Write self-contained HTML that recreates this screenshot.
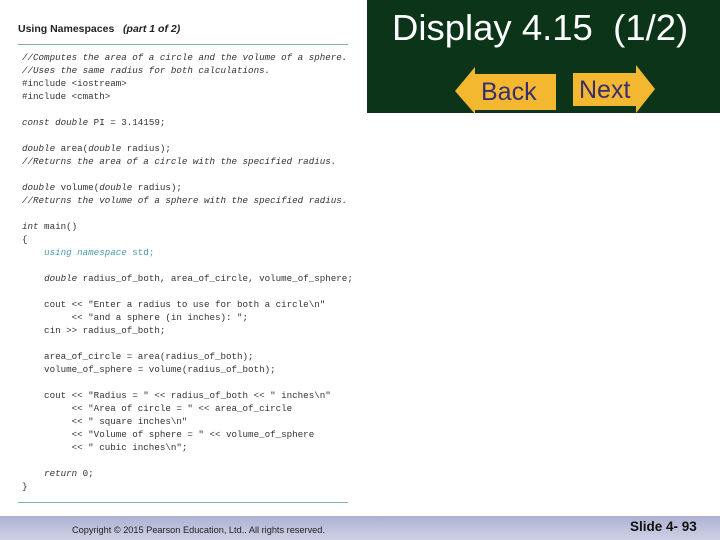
<!DOCTYPE html>
<html><head><meta charset="utf-8"><style>
body{margin:0;width:720px;height:540px;position:relative;background:#fff;overflow:hidden;font-family:"Liberation Sans",sans-serif}
.t{position:absolute;left:18px;top:23px;font-size:10.5px;font-weight:bold;color:#222}
.hr{position:absolute;left:18px;width:330px;height:1px;background:#7fb3b8}
pre{position:absolute;left:22px;top:51px;margin:0;font-family:"Liberation Mono",monospace;font-size:9.2px;line-height:13px;color:#333}
i{font-style:italic}
.c{color:#4a9ab0}
.g{position:absolute;left:367px;top:0;width:353px;height:113px;background:#0b3419}
.d{position:absolute;left:392px;top:7px;color:#fff;font-size:36.5px}
.f{position:absolute;left:0;top:516px;width:720px;height:24px;background:linear-gradient(#adb1d2,#cfd1e6)}
.cp{position:absolute;left:72px;top:525px;font-size:9.2px;color:#222}
.s{position:absolute;left:630px;top:519px;font-size:13.5px;font-weight:bold;color:#111}
</style></head><body>
<div class="t">Using Namespaces &nbsp; <i>(part 1 of 2)</i></div>
<div class="hr" style="top:44px"></div>
<pre><i>//Computes the area of a circle and the volume of a sphere.
//Uses the same radius for both calculations.</i>
#include &lt;iostream&gt;
#include &lt;cmath&gt;

<i>const double</i> PI = 3.14159;

<i>double</i> area(<i>double</i> radius);
<i>//Returns the area of a circle with the specified radius.</i>

<i>double</i> volume(<i>double</i> radius);
<i>//Returns the volume of a sphere with the specified radius.</i>

<i>int</i> main()
{
    <span class="c"><i>using namespace</i> std;</span>

    <i>double</i> radius_of_both, area_of_circle, volume_of_sphere;

    cout &lt;&lt; "Enter a radius to use for both a circle\n"
         &lt;&lt; "and a sphere (in inches): ";
    cin &gt;&gt; radius_of_both;

    area_of_circle = area(radius_of_both);
    volume_of_sphere = volume(radius_of_both);

    cout &lt;&lt; "Radius = " &lt;&lt; radius_of_both &lt;&lt; " inches\n"
         &lt;&lt; "Area of circle = " &lt;&lt; area_of_circle
         &lt;&lt; " square inches\n"
         &lt;&lt; "Volume of sphere = " &lt;&lt; volume_of_sphere
         &lt;&lt; " cubic inches\n";

    <i>return</i> 0;
}</pre>
<div class="hr" style="top:502px"></div>
<div class="g"></div>
<div class="d">Display 4.15&nbsp; (1/2)</div>
<svg style="position:absolute;left:0;top:0" width="720" height="120">
<polygon points="455,91 475,67 475,74 556,74 556,110 475,110 475,114" fill="#f3b830"/>
<polygon points="655,89 636,65 636,73 573,73 573,106 636,106 636,113" fill="#f3b830"/>
<text x="481" y="100" font-family="Liberation Sans" font-size="25" fill="#3a2f6e">Back</text>
<text x="579" y="98" font-family="Liberation Sans" font-size="25" fill="#3a2f6e">Next</text>
</svg>
<div class="f"></div>
<div class="cp">Copyright © 2015 Pearson Education, Ltd.. All rights reserved.</div>
<div class="s">Slide 4- 93</div>
</body></html>
